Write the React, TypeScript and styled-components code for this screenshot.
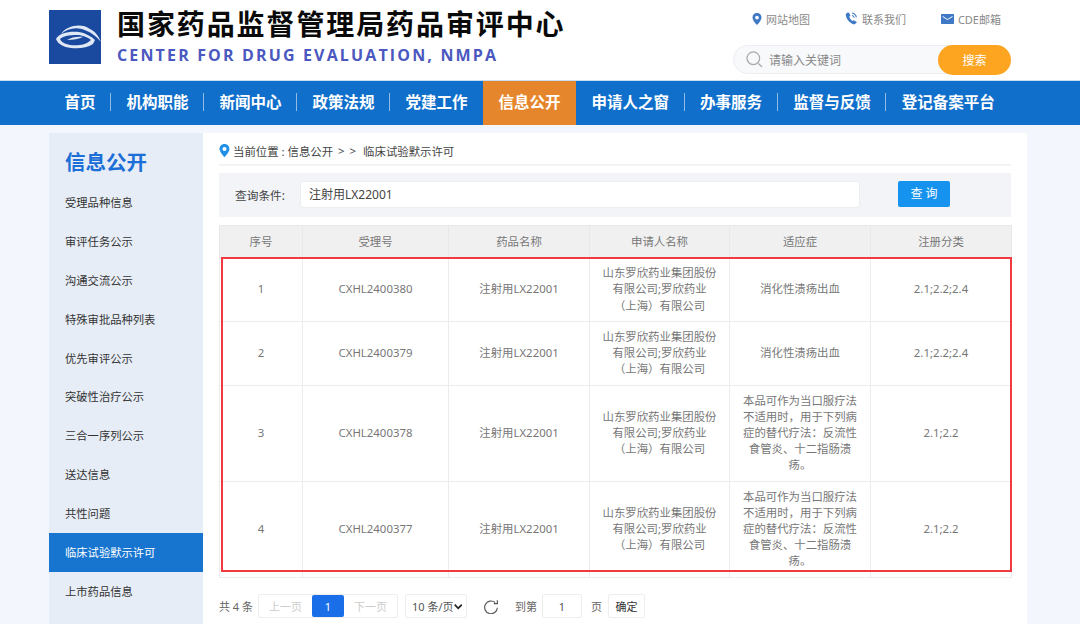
import React from "react";
import styled, { createGlobalStyle } from "styled-components";

const Global = createGlobalStyle`
  html, body { margin: 0; padding: 0; background: #f3f7fd; }
  body { font-family: "Noto Sans", "Noto Sans CJK SC", sans-serif; }
  * { box-sizing: border-box; }
`;
const Page = styled.div`
  width: 1080px; height: 624px; overflow: hidden; background: #f3f7fd;
  display: flex; flex-direction: column;
`;
const Header = styled.header`
  height: 80px; background: #fff; padding: 10px 69px 0 49px;
  display: flex; justify-content: space-between; flex: none;
`;
const Brand = styled.div` display: flex; gap: 16px; `;
const BrandText = styled.div` display: flex; flex-direction: column; margin-top: -1px; `;
const Title = styled.div`
  font-size: 28px; line-height: 30px; font-weight: 700; color: #0a0a0a; letter-spacing: 1.9px; white-space: nowrap;
`;
const SubTitle = styled.div`
  font-family: "Open Sans", "Noto Sans", sans-serif; font-size: 16px; line-height: 20px; margin-top: 6px;
  font-weight: 700; color: #4a58bf; letter-spacing: 2.15px; white-space: nowrap;
`;
const Tools = styled.div` width: 278px; display: flex; flex-direction: column; `;
const Links = styled.div`
  display: flex; gap: 35px; justify-content: flex-end; padding-right: 10px; height: 17px; align-items: center;
`;
const LinkItem = styled.div`
  display: flex; align-items: center; gap: 4px; font-size: 11px; color: #8a8a8a; white-space: nowrap;
`;
const SearchBox = styled.div`
  margin-top: 18px; height: 29px; border: 1px solid #eceef2; border-radius: 15px; background: #f8f9fb;
  display: flex; align-items: center; padding-left: 11px; position: relative;
`;
const Placeholder = styled.span` font-size: 12px; color: #888; margin-left: 5px; flex: 1; `;
const SearchBtn = styled.div`
  width: 73px; height: 30px; margin-right: -1px; border-radius: 15px; background: #fda521; color: #fff;
  font-size: 12px; display: flex; align-items: center; justify-content: center;
`;
const Nav = styled.nav`
  height: 45px; background: #0f6fcb; border-top: 1px solid #c8dcf2; padding-left: 49px; display: flex; flex: none;
`;
const NavItem = styled.div<{ $active?: boolean; $noLine?: boolean }>`
  padding: 0 15.5px 3px; height: 44px; display: flex; align-items: center; position: relative; white-space: nowrap;
  font-size: 15.5px; font-weight: 700; color: #fff;
  background: ${p => (p.$active ? "#e5862c" : "transparent")};
  ${p => !p.$noLine && `&::after { content: ""; position: absolute; right: 0; top: 12px; height: 18px; width: 1px; background: #8fbbe6; }`}
`;
const Main = styled.div` flex: 1; display: flex; padding: 8px 0 0 49px; min-height: 0; `;
const Side = styled.aside` width: 154px; background: #e7edf6; flex: none; `;
const SideTitle = styled.div`
  font-size: 20.5px; line-height: 28px; font-weight: 700; color: #1c6fd6; padding: 15px 0 0 16px; height: 50px;
`;
const SideItem = styled.div<{ $active?: boolean }>`
  height: 38.9px; line-height: 40px; padding-left: 16px; font-size: 11.3px;
  color: ${p => (p.$active ? "#fff" : "#333")}; background: ${p => (p.$active ? "#1775cf" : "transparent")};
`;
const Content = styled.main` width: 824px; background: #fff; padding: 0 16px; flex: none; `;
const Crumb = styled.div`
  height: 33px; padding-top: 4px; border-bottom: 2px solid #f2f3f5; display: flex; align-items: center; gap: 3px;
  font-size: 11.4px; color: #444; white-space: nowrap;
`;
const Sep = styled.span` margin: 0 3px 0 2px; letter-spacing: 1px; `;
const Filter = styled.div`
  margin-top: 7px; height: 44px; background: #f2f4f8; display: flex; align-items: center; padding-left: 16px;
`;
const FilterLabel = styled.span` font-size: 11.7px; color: #444; width: 65px; margin-top: -2px; `;
const FilterInput = styled.div`
  width: 560px; height: 27px; margin-top: -2px; background: #fff; border: 1px solid #eceef2; border-radius: 3px;
  font-size: 12px; color: #444; line-height: 25px; padding-left: 8px;
`;
const QueryBtn = styled.div`
  margin-left: 38px; width: 52px; height: 26px; margin-top: -2px; background: #1593ee; border-radius: 2px; color: #fff;
  font-size: 12px; display: flex; align-items: center; justify-content: center; padding-bottom: 2px;
`;
const TableWrap = styled.div` margin-top: 8px; position: relative; `;
const Table = styled.table`
  width: 792px; border-collapse: collapse; table-layout: fixed;
`;
const Th = styled.th`
  height: 33px; background: #f0f0f0; border: 1px solid #e8e8e8; font-size: 11.4px; font-weight: 400; color: #777; padding: 0 0 2px;
`;
const Td = styled.td<{ $h: number }>`
  height: ${p => p.$h}px; border: 1px solid #ececec; font-size: 11.4px; line-height: 16.1px; color: #777; text-align: center; padding: 0 0 1px;
`;
const Highlight = styled.div`
  position: absolute; left: 2px; top: 32px; width: 791px; height: 315px; border: 2px solid #f03a42; pointer-events: none;
`;
const Pager = styled.div`
  margin-top: 16px; display: flex; align-items: center; height: 24px; font-size: 11px; color: #666; white-space: nowrap;
`;
const Total = styled.span` width: 39px; `;
const PageGroup = styled.div` display: flex; border: 1px solid #eee; height: 24px; width: 140px; border-radius: 2px; `;
const PageBtn = styled.div<{ $current?: boolean; $w: number }>`
  width: ${p => p.$w}px; display: flex; align-items: center; justify-content: center; font-size: 11px;
  color: ${p => (p.$current ? "#fff" : "#ccc")}; background: ${p => (p.$current ? "#1a6fe8" : "transparent")};
  border-radius: ${p => (p.$current ? "2px" : "0")};
`;
const SizeSelect = styled.div`
  margin-left: 7px; width: 62px; height: 24px; border: 1px solid #eee; border-radius: 2px; color: #555;
  display: flex; align-items: center; justify-content: space-between; padding: 0 4px 0 6px;
`;
const Refresh = styled.span` margin-left: 17px; width: 14px; height: 16px; display: flex; align-items: center; `;
const Goto = styled.span` margin-left: 17px; width: 27px; `;
const PageInput = styled.div`
  width: 40px; height: 24px; border: 1px solid #eee; border-radius: 2px; color: #555;
  display: flex; align-items: center; justify-content: center;
`;
const PageUnit = styled.span` margin-left: 9px; width: 17px; `;
const Confirm = styled.div`
  width: 37px; height: 24px; border: 1px solid #eee; border-radius: 2px; color: #333;
  display: flex; align-items: center; justify-content: center;
`;

const Pin = ({ size = 12, color = "#3f78c4" }: { size?: number; color?: string }) => (
  <svg width={size} height={size * 1.2} viewBox="0 0 20 24">
    <path fill={color} fillRule="evenodd" d="M10 0C4.5 0 1 4 1 9c0 6 9 15 9 15s9-9 9-15c0-5-3.5-9-9-9zm0 5.5a3.7 3.7 0 1 1 0 7.4 3.7 3.7 0 0 1 0-7.4z" />
  </svg>
);
const Phone = () => (
  <svg width="13" height="13" viewBox="0 0 24 24">
    <path fill="#3f78c4" d="M5 1 1.5 3.5C1 10 6 19 17 23l4.5-3-.5-2-5-3-2.500 1.500C11 15 8.500 11.500 8 8.500L10 7 7.500 1.500z" />
    <path fill="none" stroke="#3f78c4" strokeWidth="2" d="M13 2c4 .5 7 3.500 8 8M13 6.500c2 .3 3.500 1.700 4 3.800" />
  </svg>
);
const Mail = () => (
  <svg width="13" height="10" viewBox="0 0 26 20">
    <rect width="26" height="20" rx="1.500" fill="#3f78c4" />
    <path d="M3 5l10 6 10-6" fill="none" stroke="#fff" strokeWidth="2" />
  </svg>
);
const Logo = () => (
  <svg width="52" height="54" viewBox="0 0 52 54" style={{ flex: "none" }}>
    <rect width="52" height="54" fill="#1a4a9f" />
    <path d="M12 24C18 15 33 13 41 19 47 22 50 27 52 32 47 26 42 22 33 19 25 17 18 19 12 24z" fill="#dfe8f4" />
    <path d="M7 29C10 23 20 21 30 22 36 23 42 26 46 30L44 34C38 38 30 39 22 38 14 37 9 34 7 29z" fill="#dfe8f4" />
    <path d="M11 29C15 25 24 25 30 25 36 26 40 28 42 30 37 35 28 36 21 35 16 34 12 32 11 29z" fill="#1a4a9f" />
    <path d="M18 30C22 27 30 26 34 27 30 29 24 30 18 30z" fill="#dfe8f4" />
  </svg>
);
const Magnifier = () => (
  <svg width="19" height="19" viewBox="0 0 24 24" fill="none" stroke="#aaa" strokeWidth="1.600">
    <circle cx="10.500" cy="10.500" r="8" />
    <path d="M17 17l4.500 4.500" />
  </svg>
);
const RefreshIcon = () => (
  <svg width="14" height="15" viewBox="0 0 24 26" fill="none" stroke="#555" strokeWidth="2">
    <path d="M19 6a11 11 0 1 0 4 9" />
    <path d="M23 2v6h-6" />
  </svg>
);
const Chevron = () => (
  <svg width="9" height="7" viewBox="0 0 12 8" fill="none" stroke="#222" strokeWidth="2.500">
    <path d="M1 1.500l5 5 5-5" />
  </svg>
);

const navItems = ["首页", "机构职能", "新闻中心", "政策法规", "党建工作", "信息公开", "申请人之窗", "办事服务", "监督与反馈", "登记备案平台"];
const sideItems = ["受理品种信息", "审评任务公示", "沟通交流公示", "特殊审批品种列表", "优先审评公示", "突破性治疗公示", "三合一序列公示", "送达信息", "共性问题", "临床试验默示许可", "上市药品信息"];
const shortInd = ["消化性溃疡出血"];
const longInd = ["本品可作为当口服疗法", "不适用时，用于下列病", "症的替代疗法：反流性", "食管炎、十二指肠溃", "疡。"];
const rows = [
  { n: 1, id: "CXHL2400380", ind: shortInd, cls: "2.1;2.2;2.4", h: 63 },
  { n: 2, id: "CXHL2400379", ind: shortInd, cls: "2.1;2.2;2.4", h: 64 },
  { n: 3, id: "CXHL2400378", ind: longInd, cls: "2.1;2.2", h: 96 },
  { n: 4, id: "CXHL2400377", ind: longInd, cls: "2.1;2.2", h: 96 },
];
const applicant = ["山东罗欣药业集团股份", "有限公司;罗欣药业", "（上海）有限公司"];
const Lines = ({ lines }: { lines: string[] }) => (
  <>{lines.map((l, i) => <React.Fragment key={i}>{i > 0 && <br />}{l}</React.Fragment>)}</>
);
const widths = [83, 146, 141, 140, 141, 141];
const heads = ["序号", "受理号", "药品名称", "申请人名称", "适应症", "注册分类"];

export default function App() {
  return (
    <Page>
      <Global />
      <Header>
        <Brand>
          <Logo />
          <BrandText>
            <Title>国家药品监督管理局药品审评中心</Title>
            <SubTitle>CENTER FOR DRUG EVALUATION, NMPA</SubTitle>
          </BrandText>
        </Brand>
        <Tools>
          <Links>
            <LinkItem><Pin size={10} />网站地图</LinkItem>
            <LinkItem><Phone />联系我们</LinkItem>
            <LinkItem><Mail />CDE邮箱</LinkItem>
          </Links>
          <SearchBox>
            <Magnifier />
            <Placeholder>请输入关键词</Placeholder>
            <SearchBtn>搜索</SearchBtn>
          </SearchBox>
        </Tools>
      </Header>
      <Nav>
        {navItems.map((t, i) => (
          <NavItem key={t} $active={t === "信息公开"} $noLine={i === 4 || i === 5 || i === navItems.length - 1}>{t}</NavItem>
        ))}
      </Nav>
      <Main>
        <Side>
          <SideTitle>信息公开</SideTitle>
          {sideItems.map(t => <SideItem key={t} $active={t === "临床试验默示许可"}>{t}</SideItem>)}
        </Side>
        <Content>
          <Crumb>
            <Pin size={11} color="#1f8fe8" />
            当前位置 : 信息公开<Sep>&gt; &gt;</Sep>临床试验默示许可
          </Crumb>
          <Filter>
            <FilterLabel>查询条件:</FilterLabel>
            <FilterInput>注射用LX22001</FilterInput>
            <QueryBtn>查 询</QueryBtn>
          </Filter>
          <TableWrap>
            <Table>
              <colgroup>{widths.map((w, i) => <col key={i} style={{ width: w }} />)}</colgroup>
              <thead><tr>{heads.map(h => <Th key={h}>{h}</Th>)}</tr></thead>
              <tbody>
                {rows.map(r => (
                  <tr key={r.n}>
                    <Td $h={r.h}>{r.n}</Td>
                    <Td $h={r.h}>{r.id}</Td>
                    <Td $h={r.h}>注射用LX22001</Td>
                    <Td $h={r.h}><Lines lines={applicant} /></Td>
                    <Td $h={r.h}><Lines lines={r.ind} /></Td>
                    <Td $h={r.h}>{r.cls}</Td>
                  </tr>
                ))}
              </tbody>
            </Table>
            <Highlight />
          </TableWrap>
          <Pager>
            <Total>共 4 条</Total>
            <PageGroup>
              <PageBtn $w={54}>上一页</PageBtn>
              <PageBtn $w={32} $current>1</PageBtn>
              <PageBtn $w={54}>下一页</PageBtn>
            </PageGroup>
            <SizeSelect>10 条/页<Chevron /></SizeSelect>
            <Refresh><RefreshIcon /></Refresh>
            <Goto>到第</Goto>
            <PageInput>1</PageInput>
            <PageUnit>页</PageUnit>
            <Confirm>确定</Confirm>
          </Pager>
        </Content>
      </Main>
    </Page>
  );
}
